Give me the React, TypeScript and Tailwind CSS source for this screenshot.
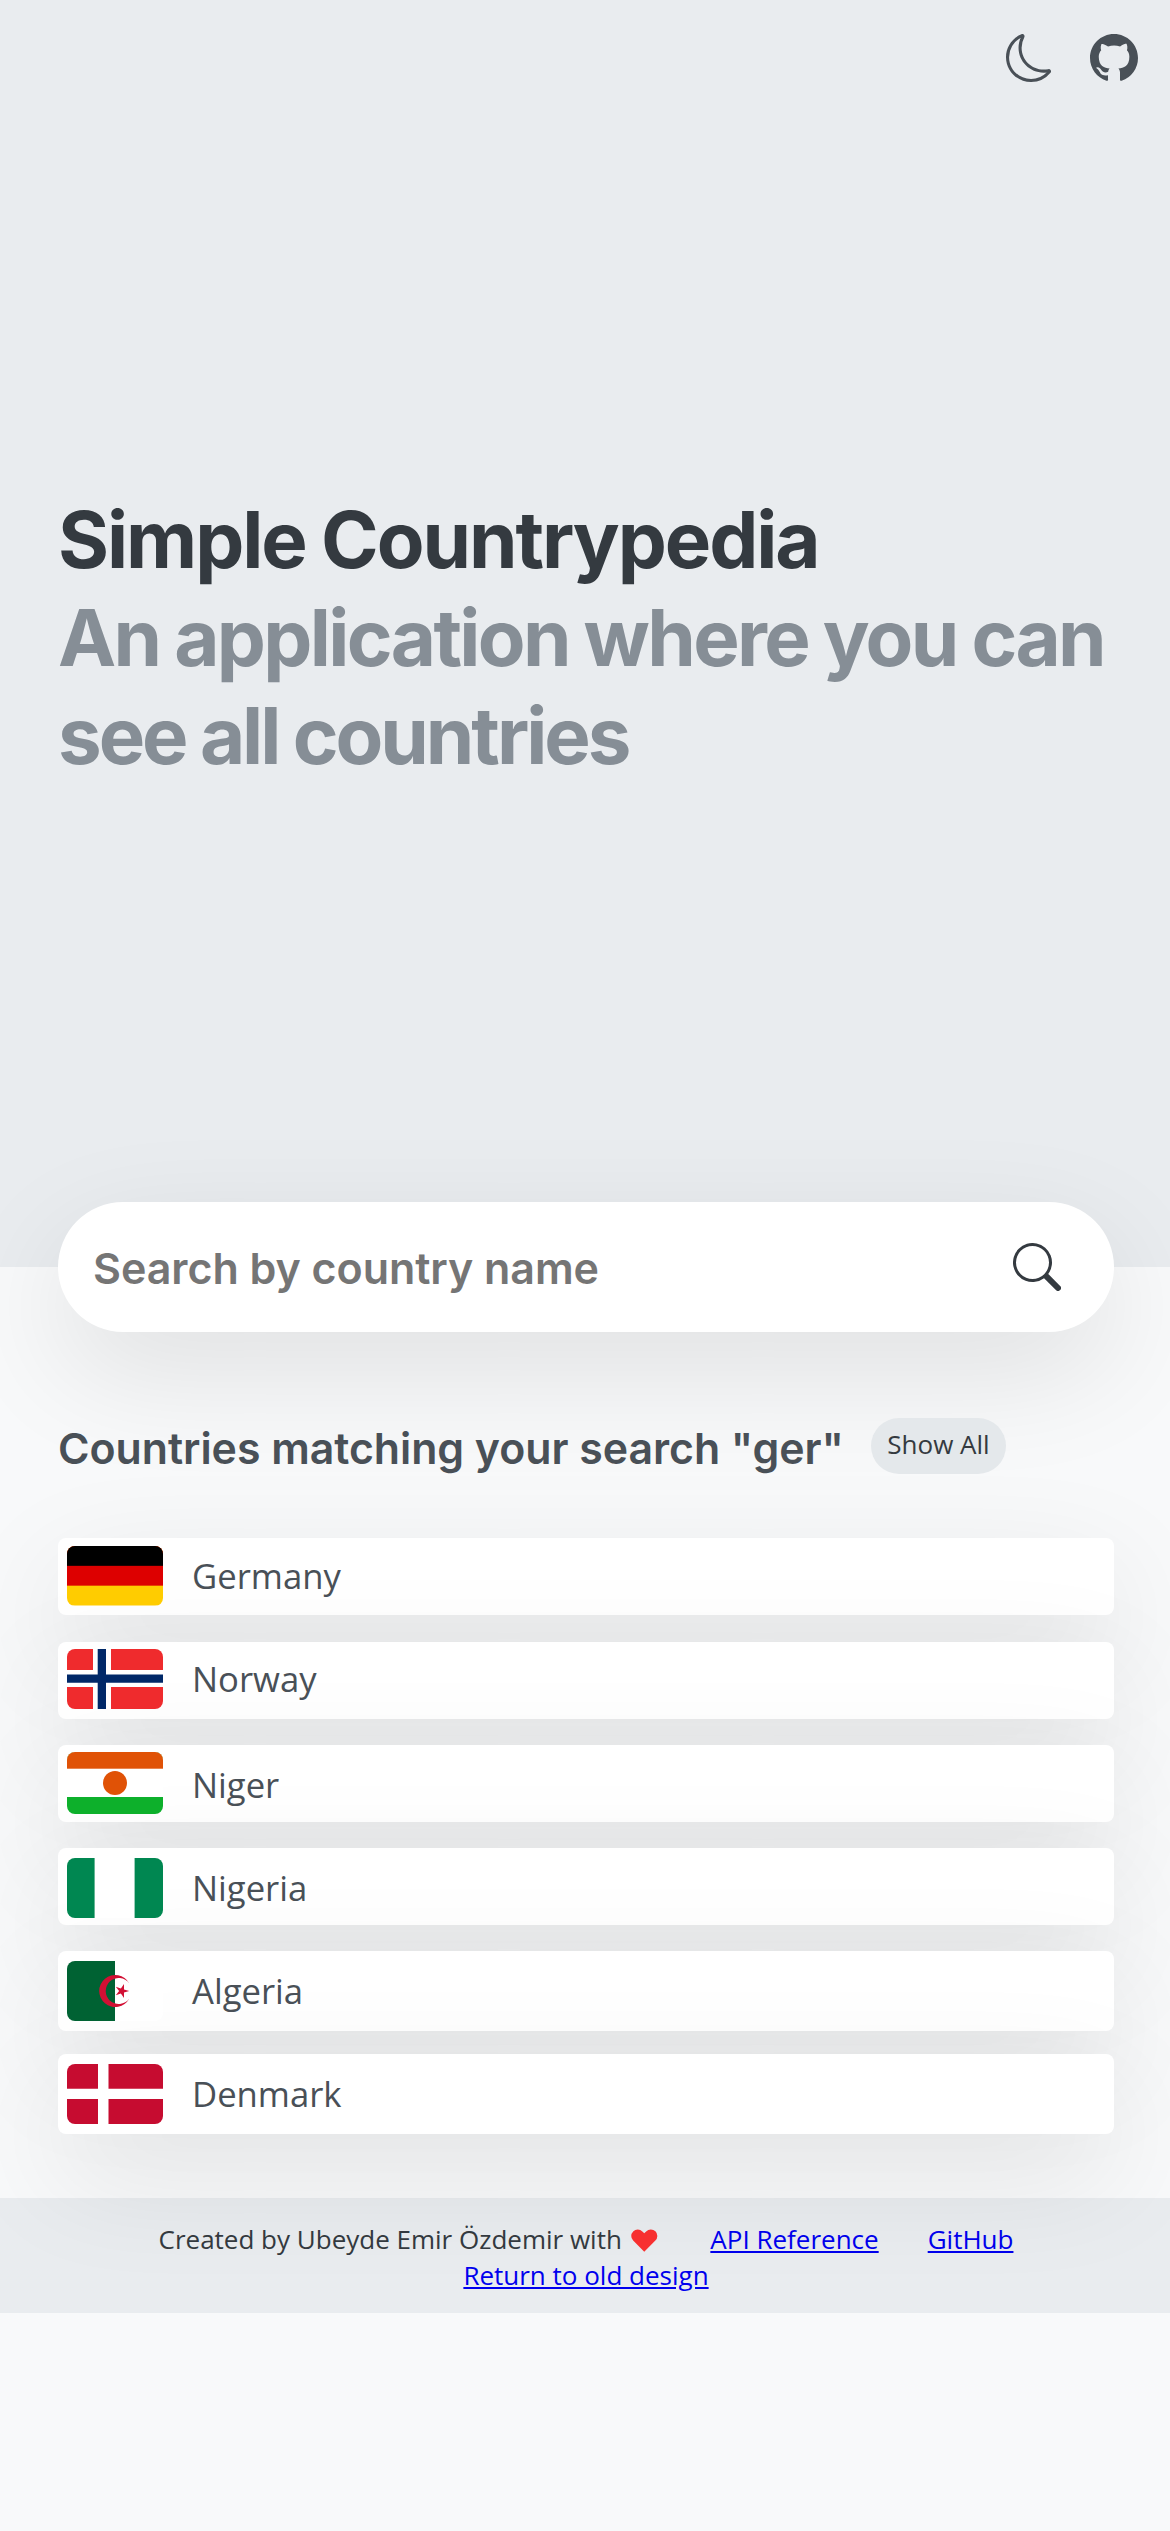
import type { ReactNode } from "react";
import { BsGithub, BsMoon, BsSearch } from "react-icons/bs";
import { HiHeart } from "react-icons/hi";

type Country = {
  name: string;
  row: string;
  flagBox: string;
  label: string;
  flag: ReactNode;
};

const countries: Country[] = [
  {
    name: "Germany",
    row: "h-[77px] mb-[27px]",
    flagBox: "mt-[8px] h-[59.5px]",
    label: "mt-[14px]",
    flag: (
      <svg viewBox="0 0 96 60" preserveAspectRatio="none" className="size-full">
        <rect width="96" height="60" fill="#fc0" />
        <rect width="96" height="40" fill="#d00" />
        <rect width="96" height="20" fill="#000" />
      </svg>
    ),
  },
  {
    name: "Norway",
    row: "h-[77px] mb-[26px]",
    flagBox: "mt-[7px] h-[60px]",
    label: "mt-[13px]",
    flag: (
      <svg viewBox="0 0 96 60" preserveAspectRatio="none" className="size-full">
        <rect width="96" height="60" fill="#ef2b2d" />
        <path d="M26 0h18v60H26zM0 21h96v17H0z" fill="#fff" />
        <path d="M30.7 0h8.3v60h-8.3zM0 25.4h96v8.4H0z" fill="#002868" />
      </svg>
    ),
  },
  {
    name: "Niger",
    row: "h-[77px] mb-[26px]",
    flagBox: "mt-[7px] h-[62px]",
    label: "mt-[16px]",
    flag: (
      <svg viewBox="0 0 96 62" preserveAspectRatio="none" className="size-full">
        <rect width="96" height="62" fill="#0db02b" />
        <rect width="96" height="45" fill="#fff" />
        <rect width="96" height="16.7" fill="#e05206" />
        <circle cx="48" cy="31" r="12" fill="#e05206" />
      </svg>
    ),
  },
  {
    name: "Nigeria",
    row: "h-[77px] mb-[26px]",
    flagBox: "mt-[10px] h-[60px]",
    label: "mt-[16px]",
    flag: (
      <svg viewBox="0 0 96 60" preserveAspectRatio="none" className="size-full">
        <rect width="96" height="60" fill="#008751" />
        <rect x="27.6" width="40" height="60" fill="#fff" />
      </svg>
    ),
  },
  {
    name: "Algeria",
    row: "h-[80px] mb-[23px]",
    flagBox: "mt-[10px] h-[60px]",
    label: "mt-[16px]",
    flag: (
      <svg viewBox="0 0 96 60" preserveAspectRatio="none" className="size-full">
        <rect width="96" height="60" fill="#fff" />
        <rect width="48" height="60" fill="#006233" />
        <path
          d="M62.2 22.3A16 16 0 1 0 62.2 37.7A13 13 0 1 1 62.2 22.3Z"
          fill="#d21034"
        />
        <path
          d="M62.2 30L57 31.6V37L53.9 32.6L48.8 34.3L52.1 30L48.8 25.7L53.9 27.4L57 23V28.4Z"
          fill="#d21034"
        />
      </svg>
    ),
  },
  {
    name: "Denmark",
    row: "h-[80px]",
    flagBox: "mt-[10px] h-[60px]",
    label: "mt-[16px]",
    flag: (
      <svg viewBox="0 0 96 60" preserveAspectRatio="none" className="size-full">
        <rect width="96" height="60" fill="#c60c30" />
        <path d="M31 0h10.5v60H31zM0 24.7h96v10.3H0z" fill="#fff" />
      </svg>
    ),
  },
];

function Hero() {
  return (
    <header className="h-[1267px] bg-[#e9ecef]">
      <nav className="flex justify-end gap-9 pr-8 pt-[34px] text-[#495057]">
        <BsMoon size={48} />
        <BsGithub size={48} />
      </nav>
      <h1 className="mt-[409px] ml-[58px] font-['Inter',sans-serif] text-[78px] leading-[98px] font-bold whitespace-nowrap text-[#868e96] [word-spacing:-1px]">
        <span className="block tracking-[-2.08px] text-[#343a40]">Simple Countrypedia</span>
        <span className="block tracking-[-2.67px]">An application where you can</span>
        <span className="block tracking-[-3.05px]">see all countries</span>
      </h1>
    </header>
  );
}

function SearchBar() {
  return (
    <div className="mr-[56px] ml-[58px] -mt-[65px] flex h-[130px] items-center rounded-full bg-white pr-[53px] pl-[35px] shadow-[0_39px_117px_rgba(0,0,0,0.1)]">
      <input
        className="h-full min-w-0 flex-1 bg-transparent pt-px font-['Inter',sans-serif] text-[43px] font-semibold tracking-[-0.05px] text-[#343a40] outline-none placeholder:text-[#757575]"
        placeholder="Search by country name"
      />
      <BsSearch size={48} className="text-[#343a40]" />
    </div>
  );
}

export default function App() {
  return (
    <div className="min-h-[2531px] overflow-hidden bg-[#f8f9fa] font-['Open_Sans',sans-serif] text-[26px] text-[#343a40]">
      <Hero />
      <SearchBar />
      <main className="mt-[86px] mr-[56px] ml-[58px]">
        <div className="flex h-14 items-center">
          <h2 className="w-[813px] pt-[3px] font-['Inter',sans-serif] text-[42.85px] leading-[52px] font-semibold tracking-[-0.04px] whitespace-nowrap text-[#495057]">
            Countries matching your search "ger"
          </h2>
          <button className="h-14 w-[135px] rounded-full bg-[#e4e8eb] pb-[4px] leading-none">
            Show All
          </button>
        </div>
        <ul className="relative z-10 mt-16">
          {countries.map((c) => (
            <li
              key={c.name}
              className={`flex items-start rounded-lg bg-white pl-[9px] shadow-[0_39px_117px_rgba(0,0,0,0.1)] ${c.row}`}
            >
              <div className={`w-24 overflow-hidden rounded-lg ${c.flagBox}`}>{c.flag}</div>
              <span className={`ml-[29px] text-[34.67px] leading-[48px] text-[#495057] ${c.label}`}>
                {c.name}
              </span>
            </li>
          ))}
        </ul>
      </main>
      <footer className="mt-16 h-[115px] bg-[#e9ecef] pt-[23px] pl-[2px] leading-[36px]">
        <div className="flex justify-center">
          <span className="flex items-center">
            Created by Ubeyde Emir Özdemir with
            <HiHeart size={32.5} className="ml-[6px] text-[#fa3131]" />
          </span>
          <a href="#api" className="ml-[50px] text-[#0000ee] underline">
            API Reference
          </a>
          <a href="#github" className="ml-[49px] text-[#0000ee] underline">
            GitHub
          </a>
        </div>
        <div className="text-center">
          <a href="#old" className="text-[#0000ee] underline">
            Return to old design
          </a>
        </div>
      </footer>
    </div>
  );
}
